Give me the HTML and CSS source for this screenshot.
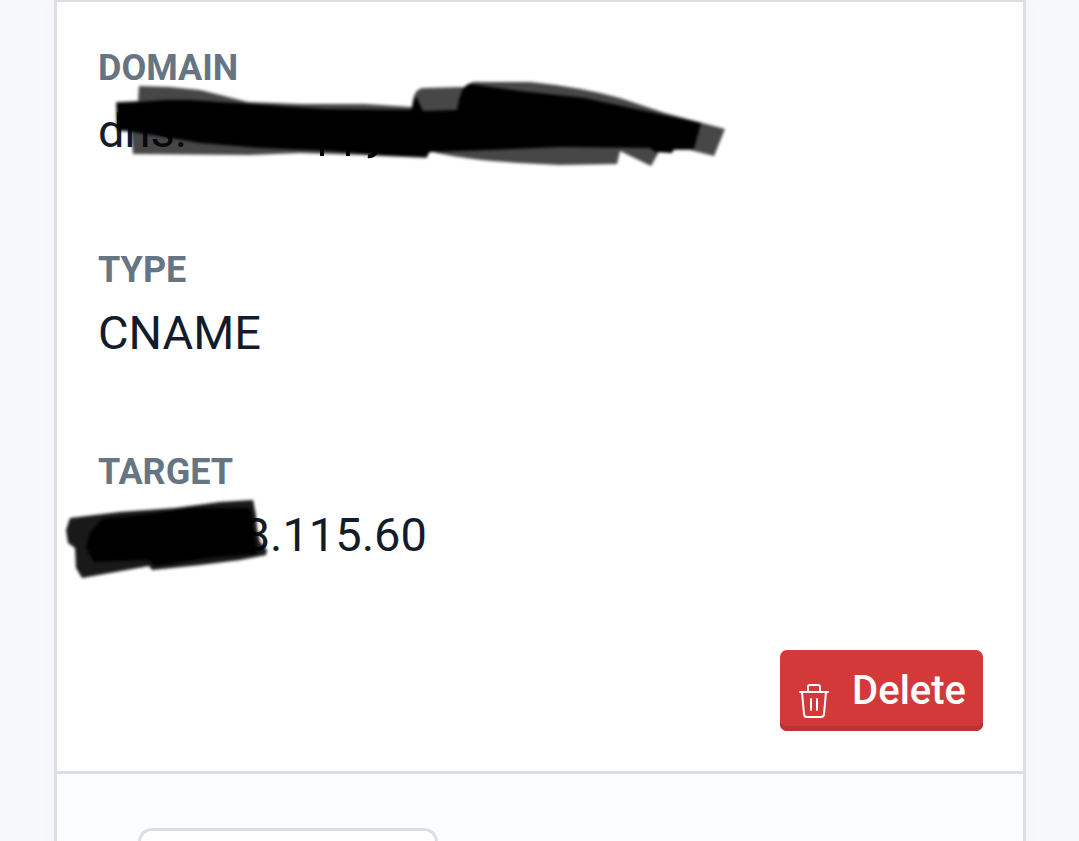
FILE: index.html
```
<!DOCTYPE html>
<html lang="en">
<head>
<meta charset="UTF-8">
<meta name="viewport" content="width=device-width, initial-scale=1.0">
<title>DNS record</title>
<link rel="stylesheet" href="styles.css">
</head>
<body>
<div class="card">
	<div class="record">
		<dl class="fields">
			<div class="field">
				<dt>Domain</dt>
				<dd>dns.
					<svg class="scribble" width="670" height="100" viewBox="60 75 670 100" aria-hidden="true">
						<defs>
							<filter id="soft" x="-5%" y="-20%" width="110%" height="140%"><feGaussianBlur stdDeviation="1.8"/></filter>
						</defs>
						<g filter="url(#soft)">
							<path fill="#000" fill-opacity="0.72" d="M139 86L170 87L200 90L248 102L300 104L365 104L412 107Q413 88 424 88L465 87Q470 81 480 82L530 82Q580 87 620 98L665 113L725 129L714 156L690 150L660 150L651 166L620 151L617 164L560 165Q470 162 429 151L427 158L360 155L300 153L250 155L133 154L131 132L117 131L116 102L138 101Z"/>
							<path fill="#000" d="M117 103L139 102L165 100L190 100L250 104L325 109L411 110L416 96L423 111L457 110Q461 84 470 84L520 91L585 98L640 110L701 123L694 149L674 149L672 153L655 152L650 148L560 147L490 150L430 152L426 157L380 155L330 151L260 148L200 143L165 137L132 132L131 130L117 130Z"/>
						</g>
						<path fill="none" stroke="#000" stroke-width="4" d="M322 140V156M348 140V156M376 152Q373 157 368 156"/>
					</svg>
				</dd>
			</div>
			<div class="field">
				<dt>Type</dt>
				<dd>CNAME</dd>
			</div>
			<div class="field">
				<dt>Target</dt>
				<dd><span class="hidden-part">8</span>.115.60
					<svg class="scribble" width="240" height="120" viewBox="60 479 240 120" aria-hidden="true">
						<g filter="url(#soft)">
							<path fill="#000" fill-opacity="0.9" d="M70 518L120 512L175 508L220 502L253 500L256 515L257 528L260 542L267 550L266 555L240 560L200 565L152 570L149 566L82 578L76 568L75 548L68 543L66 530Z"/>
							<path fill="#000" d="M102 519L150 514L190 508L250 508L254 530L257 554L215 557L155 566L149 560L94 562L86 548L90 533Z"/>
						</g>
					</svg>
				</dd>
			</div>
		</dl>
		<button type="button" class="delete">
			<svg class="trash" width="30" height="34" viewBox="0 0 30 34" fill="none" stroke="#fff" stroke-width="2" stroke-linecap="round" stroke-linejoin="round" aria-hidden="true">
				<path d="M1 8H29M3 8L5 30Q5 33 8 33H22Q25 33 25 30L27 8M9 7V3Q9 1 11 1H19Q21 1 21 3V7M12 15V26M18 15V26"/>
			</svg>
			Delete
		</button>
	</div>
	<div class="actions">
		<button type="button" class="plain"></button>
	</div>
</div>
</body>
</html>
```
FILE: styles.css
```
* {
	box-sizing: border-box;
}

body {
	margin: 0;
	min-height: 100vh;
	padding: 0 53px 0 54px;
	background-color: #f6f8fc;
	color: #141c2c;
	font-family: Roboto, sans-serif;
	overflow: hidden;
}

.card {
	border: 3px solid #dcdee1;
	border-top-width: 2px;
	background-color: #fbfcfe;
	box-shadow: 0 0 16px rgba(0, 0, 0, 0.03);
}

.record {
	display: flex;
	flex-direction: column;
	gap: 79px;
	padding: 39px 40px 40px 41px;
	background-color: #fff;
	border-bottom: 3px solid #dcdee1;
}

.fields {
	display: flex;
	flex-direction: column;
	gap: 76px;
	margin: 0;
}

.field dt {
	color: #677583;
	font-size: 36px;
	font-weight: bold;
	line-height: 54px;
	text-transform: uppercase;
}

.field dd {
	position: relative;
	margin: 0;
	font-size: 47px;
	line-height: 72px;
}

/* marker strokes laid over the value */
.scribble {
	position: absolute;
	top: -20px;
	left: -38px;
	max-width: none;
}

.hidden-part {
	display: inline-block;
	width: 172px;
	text-align: right;
}

.delete {
	display: flex;
	align-items: center;
	align-self: flex-end;
	gap: 23px;
	height: 81px;
	padding: 0 17px 0 19px;
	border: 0;
	border-radius: 7px;
	background-color: #d33939;
	box-shadow: inset 0 -5px #bb3333;
	color: #fff;
	font-family: inherit;
	font-size: 40px;
	font-weight: 500;
	cursor: pointer;
}

.trash {
	margin-top: 20px;
}

.actions {
	padding: 54px 81px;
}

.plain {
	width: 300px;
	height: 90px;
	border: 3px solid #dcdee1;
	border-radius: 14px;
	background-color: #fff;
}
```
